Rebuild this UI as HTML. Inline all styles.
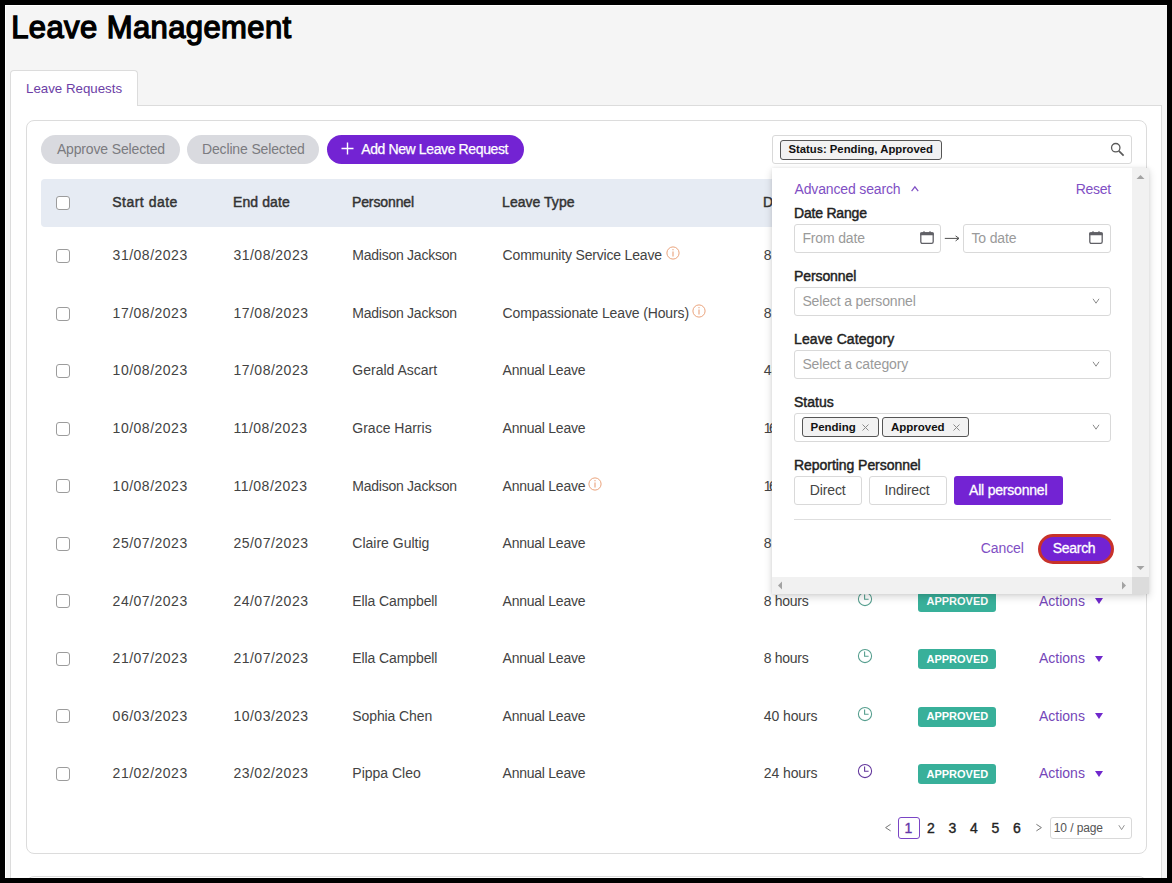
<!DOCTYPE html>
<html><head><meta charset="utf-8"><style>
html,body{margin:0;padding:0;}
body{width:1172px;height:883px;background:#000;position:relative;overflow:hidden;font-family:"Liberation Sans", sans-serif;}
.t{position:absolute;line-height:1;white-space:nowrap;}
</style></head><body>
<div style="position:absolute;left:5px;top:5px;width:1162px;height:873px;box-sizing:border-box;background:#f5f5f5;border-top:1px solid #fff;border-left:1px solid #fff;"></div>
<div class="t" style="left:11.20px;top:12.46px;font-size:31px;color:#000;font-weight:400;letter-spacing:0.4px;-webkit-text-stroke:1.35px #000;">Leave Management</div>
<div style="position:absolute;left:10px;top:105px;width:1152px;height:795px;box-sizing:border-box;background:#fff;border:1px solid #dcdcdc;"></div>
<div style="position:absolute;left:10px;top:70px;width:128px;height:36px;box-sizing:border-box;background:#fff;border:1px solid #dcdcdc;border-bottom:none;border-radius:4px 4px 0 0;"></div>
<div class="t" style="left:26.00px;top:81.54px;font-size:13.3px;color:#6c3ea6;font-weight:400;letter-spacing:0px;">Leave Requests</div>
<div style="position:absolute;left:26px;top:120px;width:1121px;height:734px;box-sizing:border-box;border:1px solid #dcdcdc;border-radius:8px;"></div>
<div style="position:absolute;left:26px;top:876px;width:1121px;height:44px;box-sizing:border-box;border:1px solid #dcdcdc;border-radius:8px;"></div>
<div style="position:absolute;left:41px;top:135px;width:139px;height:29px;box-sizing:border-box;background:#d9dadf;border-radius:15px;"></div>
<div class="t" style="left:56.90px;top:142.05px;font-size:14px;color:#7b7b80;font-weight:400;letter-spacing:-0.15px;">Approve Selected</div>
<div style="position:absolute;left:187px;top:135px;width:132px;height:29px;box-sizing:border-box;background:#d9dadf;border-radius:15px;"></div>
<div class="t" style="left:202.00px;top:142.05px;font-size:14px;color:#7b7b80;font-weight:400;letter-spacing:-0.15px;">Decline Selected</div>
<div style="position:absolute;left:327px;top:135px;width:197px;height:29px;box-sizing:border-box;background:#7323d3;border-radius:15px;"></div>
<svg style="position:absolute;left:341px;top:142px" width="13" height="13" viewBox="0 0 13 13"><path d="M6.5 0.5V12.5M0.5 6.5H12.5" stroke="#fff" stroke-width="1.4" fill="none"/></svg>
<div class="t" style="left:361.20px;top:142.05px;font-size:14px;color:#fff;font-weight:400;letter-spacing:-0.38px;-webkit-text-stroke:0.25px #fff;">Add New Leave Request</div>
<div style="position:absolute;left:41px;top:179px;width:1091px;height:48px;box-sizing:border-box;background:#e6ebf3;border-radius:4px;"></div>
<div style="position:absolute;left:56px;top:196px;width:14px;height:14px;box-sizing:border-box;border:1px solid #9c9c9c;border-radius:3px;background:#fff;"></div>
<div class="t" style="left:112.20px;top:195.15px;font-size:14px;color:#333;font-weight:400;letter-spacing:0.5px;-webkit-text-stroke:0.45px #333;">Start date</div>
<div class="t" style="left:233.00px;top:195.15px;font-size:14px;color:#333;font-weight:400;letter-spacing:0.1px;-webkit-text-stroke:0.45px #333;">End date</div>
<div class="t" style="left:351.90px;top:195.15px;font-size:14px;color:#333;font-weight:400;letter-spacing:-0.1px;-webkit-text-stroke:0.45px #333;">Personnel</div>
<div class="t" style="left:502.10px;top:195.15px;font-size:14px;color:#333;font-weight:400;letter-spacing:0.03px;-webkit-text-stroke:0.45px #333;">Leave Type</div>
<div class="t" style="left:763.00px;top:195.15px;font-size:14px;color:#333;font-weight:400;letter-spacing:0px;-webkit-text-stroke:0.45px #333;">Duration</div>
<div class="t" style="left:865.00px;top:195.15px;font-size:14px;color:#333;font-weight:700;letter-spacing:0px;"></div>
<div class="t" style="left:918.00px;top:195.15px;font-size:14px;color:#333;font-weight:400;letter-spacing:0px;-webkit-text-stroke:0.45px #333;">Status</div>
<div class="t" style="left:1039.00px;top:195.15px;font-size:14px;color:#333;font-weight:400;letter-spacing:0px;-webkit-text-stroke:0.45px #333;">Actions</div>
<div style="position:absolute;left:56px;top:249px;width:14px;height:14px;box-sizing:border-box;border:1px solid #9c9c9c;border-radius:3px;background:#fff;"></div>
<div class="t" style="left:112.60px;top:248.15px;font-size:14px;color:#434343;font-weight:400;letter-spacing:0.5px;">31/08/2023</div>
<div class="t" style="left:233.40px;top:248.15px;font-size:14px;color:#434343;font-weight:400;letter-spacing:0.5px;">31/08/2023</div>
<div class="t" style="left:352.30px;top:248.15px;font-size:14px;color:#434343;font-weight:400;letter-spacing:-0.25px;">Madison Jackson</div>
<div class="t" style="left:502.60px;top:248.15px;font-size:14px;color:#434343;font-weight:400;letter-spacing:-0.18px;">Community Service Leave</div>
<svg style="position:absolute;left:666px;top:246px" width="14" height="14" viewBox="0 0 14 14"><circle cx="7" cy="7" r="6.1" stroke="#eaa37c" stroke-width="1" fill="none"/><path d="M7 5.6V10.6" stroke="#e9a07a" stroke-width="1.1"/><circle cx="7" cy="3.7" r="0.65" fill="#e9a07a"/></svg>
<div class="t" style="left:763.80px;top:248.15px;font-size:14px;color:#434343;font-weight:400;letter-spacing:-0.3px;">8 hours</div>
<svg style="position:absolute;left:857px;top:246px" width="16" height="16" viewBox="0 0 16 16"><circle cx="8" cy="8" r="6.6" stroke="#559e8e" stroke-width="1.05" fill="none"/><path d="M7.6 3.6V8.3H11.6" stroke="#559e8e" stroke-width="1.1" fill="none"/></svg>
<div style="position:absolute;left:918px;top:246px;width:78px;height:20px;box-sizing:border-box;background:#38b09a;border-radius:3px;"></div>
<div class="t" style="left:926.50px;top:250.89px;font-size:11px;color:#fff;font-weight:700;letter-spacing:0px;">APPROVED</div>
<div class="t" style="left:1039.00px;top:248.15px;font-size:14px;color:#7446b8;font-weight:400;letter-spacing:0px;">Actions</div>
<svg style="position:absolute;left:1094px;top:252px" width="10" height="8" viewBox="0 0 10 8"><path d="M1 1H9L5 7Z" fill="#7028cc"/></svg>
<div style="position:absolute;left:56px;top:307px;width:14px;height:14px;box-sizing:border-box;border:1px solid #9c9c9c;border-radius:3px;background:#fff;"></div>
<div class="t" style="left:112.60px;top:306.15px;font-size:14px;color:#434343;font-weight:400;letter-spacing:0.5px;">17/08/2023</div>
<div class="t" style="left:233.40px;top:306.15px;font-size:14px;color:#434343;font-weight:400;letter-spacing:0.5px;">17/08/2023</div>
<div class="t" style="left:352.30px;top:306.15px;font-size:14px;color:#434343;font-weight:400;letter-spacing:-0.25px;">Madison Jackson</div>
<div class="t" style="left:502.60px;top:306.15px;font-size:14px;color:#434343;font-weight:400;letter-spacing:-0.13px;">Compassionate Leave (Hours)</div>
<svg style="position:absolute;left:692px;top:304px" width="14" height="14" viewBox="0 0 14 14"><circle cx="7" cy="7" r="6.1" stroke="#eaa37c" stroke-width="1" fill="none"/><path d="M7 5.6V10.6" stroke="#e9a07a" stroke-width="1.1"/><circle cx="7" cy="3.7" r="0.65" fill="#e9a07a"/></svg>
<div class="t" style="left:763.80px;top:306.15px;font-size:14px;color:#434343;font-weight:400;letter-spacing:-0.3px;">8 hours</div>
<svg style="position:absolute;left:857px;top:303px" width="16" height="16" viewBox="0 0 16 16"><circle cx="8" cy="8" r="6.6" stroke="#559e8e" stroke-width="1.05" fill="none"/><path d="M7.6 3.6V8.3H11.6" stroke="#559e8e" stroke-width="1.1" fill="none"/></svg>
<div style="position:absolute;left:918px;top:304px;width:78px;height:20px;box-sizing:border-box;background:#38b09a;border-radius:3px;"></div>
<div class="t" style="left:926.50px;top:308.42px;font-size:11px;color:#fff;font-weight:700;letter-spacing:0px;">APPROVED</div>
<div class="t" style="left:1039.00px;top:306.15px;font-size:14px;color:#7446b8;font-weight:400;letter-spacing:0px;">Actions</div>
<svg style="position:absolute;left:1094px;top:310px" width="10" height="8" viewBox="0 0 10 8"><path d="M1 1H9L5 7Z" fill="#7028cc"/></svg>
<div style="position:absolute;left:56px;top:364px;width:14px;height:14px;box-sizing:border-box;border:1px solid #9c9c9c;border-radius:3px;background:#fff;"></div>
<div class="t" style="left:112.60px;top:363.15px;font-size:14px;color:#434343;font-weight:400;letter-spacing:0.5px;">10/08/2023</div>
<div class="t" style="left:233.40px;top:363.15px;font-size:14px;color:#434343;font-weight:400;letter-spacing:0.5px;">17/08/2023</div>
<div class="t" style="left:352.30px;top:363.15px;font-size:14px;color:#434343;font-weight:400;letter-spacing:0px;">Gerald Ascart</div>
<div class="t" style="left:502.60px;top:363.15px;font-size:14px;color:#434343;font-weight:400;letter-spacing:-0.25px;">Annual Leave</div>
<div class="t" style="left:763.80px;top:363.15px;font-size:14px;color:#434343;font-weight:400;letter-spacing:-0.1px;">48 hours</div>
<svg style="position:absolute;left:857px;top:361px" width="16" height="16" viewBox="0 0 16 16"><circle cx="8" cy="8" r="6.6" stroke="#559e8e" stroke-width="1.05" fill="none"/><path d="M7.6 3.6V8.3H11.6" stroke="#559e8e" stroke-width="1.1" fill="none"/></svg>
<div style="position:absolute;left:918px;top:362px;width:78px;height:20px;box-sizing:border-box;background:#38b09a;border-radius:3px;"></div>
<div class="t" style="left:926.50px;top:365.95px;font-size:11px;color:#fff;font-weight:700;letter-spacing:0px;">APPROVED</div>
<div class="t" style="left:1039.00px;top:363.15px;font-size:14px;color:#7446b8;font-weight:400;letter-spacing:0px;">Actions</div>
<svg style="position:absolute;left:1094px;top:367px" width="10" height="8" viewBox="0 0 10 8"><path d="M1 1H9L5 7Z" fill="#7028cc"/></svg>
<div style="position:absolute;left:56px;top:422px;width:14px;height:14px;box-sizing:border-box;border:1px solid #9c9c9c;border-radius:3px;background:#fff;"></div>
<div class="t" style="left:112.60px;top:421.15px;font-size:14px;color:#434343;font-weight:400;letter-spacing:0.5px;">10/08/2023</div>
<div class="t" style="left:233.40px;top:421.15px;font-size:14px;color:#434343;font-weight:400;letter-spacing:0.5px;">11/08/2023</div>
<div class="t" style="left:352.30px;top:421.15px;font-size:14px;color:#434343;font-weight:400;letter-spacing:0px;">Grace Harris</div>
<div class="t" style="left:502.60px;top:421.15px;font-size:14px;color:#434343;font-weight:400;letter-spacing:-0.25px;">Annual Leave</div>
<div class="t" style="left:763.80px;top:421.15px;font-size:14px;color:#434343;font-weight:400;letter-spacing:-0.1px;">1<span style="margin-left:-2.5px">6</span> hours</div>
<svg style="position:absolute;left:857px;top:418px" width="16" height="16" viewBox="0 0 16 16"><circle cx="8" cy="8" r="6.6" stroke="#559e8e" stroke-width="1.05" fill="none"/><path d="M7.6 3.6V8.3H11.6" stroke="#559e8e" stroke-width="1.1" fill="none"/></svg>
<div style="position:absolute;left:918px;top:419px;width:78px;height:20px;box-sizing:border-box;background:#38b09a;border-radius:3px;"></div>
<div class="t" style="left:926.50px;top:423.48px;font-size:11px;color:#fff;font-weight:700;letter-spacing:0px;">APPROVED</div>
<div class="t" style="left:1039.00px;top:421.15px;font-size:14px;color:#7446b8;font-weight:400;letter-spacing:0px;">Actions</div>
<svg style="position:absolute;left:1094px;top:425px" width="10" height="8" viewBox="0 0 10 8"><path d="M1 1H9L5 7Z" fill="#7028cc"/></svg>
<div style="position:absolute;left:56px;top:479px;width:14px;height:14px;box-sizing:border-box;border:1px solid #9c9c9c;border-radius:3px;background:#fff;"></div>
<div class="t" style="left:112.60px;top:479.15px;font-size:14px;color:#434343;font-weight:400;letter-spacing:0.5px;">10/08/2023</div>
<div class="t" style="left:233.40px;top:479.15px;font-size:14px;color:#434343;font-weight:400;letter-spacing:0.5px;">11/08/2023</div>
<div class="t" style="left:352.30px;top:479.15px;font-size:14px;color:#434343;font-weight:400;letter-spacing:-0.25px;">Madison Jackson</div>
<div class="t" style="left:502.60px;top:479.15px;font-size:14px;color:#434343;font-weight:400;letter-spacing:-0.25px;">Annual Leave</div>
<svg style="position:absolute;left:588px;top:477px" width="14" height="14" viewBox="0 0 14 14"><circle cx="7" cy="7" r="6.1" stroke="#eaa37c" stroke-width="1" fill="none"/><path d="M7 5.6V10.6" stroke="#e9a07a" stroke-width="1.1"/><circle cx="7" cy="3.7" r="0.65" fill="#e9a07a"/></svg>
<div class="t" style="left:763.80px;top:479.15px;font-size:14px;color:#434343;font-weight:400;letter-spacing:-0.1px;">1<span style="margin-left:-2.5px">6</span> hours</div>
<svg style="position:absolute;left:857px;top:476px" width="16" height="16" viewBox="0 0 16 16"><circle cx="8" cy="8" r="6.6" stroke="#559e8e" stroke-width="1.05" fill="none"/><path d="M7.6 3.6V8.3H11.6" stroke="#559e8e" stroke-width="1.1" fill="none"/></svg>
<div style="position:absolute;left:918px;top:477px;width:78px;height:20px;box-sizing:border-box;background:#38b09a;border-radius:3px;"></div>
<div class="t" style="left:926.50px;top:481.01px;font-size:11px;color:#fff;font-weight:700;letter-spacing:0px;">APPROVED</div>
<div class="t" style="left:1039.00px;top:479.15px;font-size:14px;color:#7446b8;font-weight:400;letter-spacing:0px;">Actions</div>
<svg style="position:absolute;left:1094px;top:482px" width="10" height="8" viewBox="0 0 10 8"><path d="M1 1H9L5 7Z" fill="#7028cc"/></svg>
<div style="position:absolute;left:56px;top:537px;width:14px;height:14px;box-sizing:border-box;border:1px solid #9c9c9c;border-radius:3px;background:#fff;"></div>
<div class="t" style="left:112.60px;top:536.15px;font-size:14px;color:#434343;font-weight:400;letter-spacing:0.5px;">25/07/2023</div>
<div class="t" style="left:233.40px;top:536.15px;font-size:14px;color:#434343;font-weight:400;letter-spacing:0.5px;">25/07/2023</div>
<div class="t" style="left:352.30px;top:536.15px;font-size:14px;color:#434343;font-weight:400;letter-spacing:0px;">Claire Gultig</div>
<div class="t" style="left:502.60px;top:536.15px;font-size:14px;color:#434343;font-weight:400;letter-spacing:-0.25px;">Annual Leave</div>
<div class="t" style="left:763.80px;top:536.15px;font-size:14px;color:#434343;font-weight:400;letter-spacing:-0.3px;">8 hours</div>
<svg style="position:absolute;left:857px;top:533px" width="16" height="16" viewBox="0 0 16 16"><circle cx="8" cy="8" r="6.6" stroke="#559e8e" stroke-width="1.05" fill="none"/><path d="M7.6 3.6V8.3H11.6" stroke="#559e8e" stroke-width="1.1" fill="none"/></svg>
<div style="position:absolute;left:918px;top:534px;width:78px;height:20px;box-sizing:border-box;background:#38b09a;border-radius:3px;"></div>
<div class="t" style="left:926.50px;top:538.54px;font-size:11px;color:#fff;font-weight:700;letter-spacing:0px;">APPROVED</div>
<div class="t" style="left:1039.00px;top:536.15px;font-size:14px;color:#7446b8;font-weight:400;letter-spacing:0px;">Actions</div>
<svg style="position:absolute;left:1094px;top:540px" width="10" height="8" viewBox="0 0 10 8"><path d="M1 1H9L5 7Z" fill="#7028cc"/></svg>
<div style="position:absolute;left:56px;top:594px;width:14px;height:14px;box-sizing:border-box;border:1px solid #9c9c9c;border-radius:3px;background:#fff;"></div>
<div class="t" style="left:112.60px;top:594.15px;font-size:14px;color:#434343;font-weight:400;letter-spacing:0.5px;">24/07/2023</div>
<div class="t" style="left:233.40px;top:594.15px;font-size:14px;color:#434343;font-weight:400;letter-spacing:0.5px;">24/07/2023</div>
<div class="t" style="left:352.30px;top:594.15px;font-size:14px;color:#434343;font-weight:400;letter-spacing:-0.1px;">Ella Campbell</div>
<div class="t" style="left:502.60px;top:594.15px;font-size:14px;color:#434343;font-weight:400;letter-spacing:-0.25px;">Annual Leave</div>
<div class="t" style="left:763.80px;top:594.15px;font-size:14px;color:#434343;font-weight:400;letter-spacing:-0.3px;">8 hours</div>
<svg style="position:absolute;left:857px;top:591px" width="16" height="16" viewBox="0 0 16 16"><circle cx="8" cy="8" r="6.6" stroke="#559e8e" stroke-width="1.05" fill="none"/><path d="M7.6 3.6V8.3H11.6" stroke="#559e8e" stroke-width="1.1" fill="none"/></svg>
<div style="position:absolute;left:918px;top:592px;width:78px;height:20px;box-sizing:border-box;background:#38b09a;border-radius:3px;"></div>
<div class="t" style="left:926.50px;top:596.07px;font-size:11px;color:#fff;font-weight:700;letter-spacing:0px;">APPROVED</div>
<div class="t" style="left:1039.00px;top:594.15px;font-size:14px;color:#7446b8;font-weight:400;letter-spacing:0px;">Actions</div>
<svg style="position:absolute;left:1094px;top:597px" width="10" height="8" viewBox="0 0 10 8"><path d="M1 1H9L5 7Z" fill="#7028cc"/></svg>
<div style="position:absolute;left:56px;top:652px;width:14px;height:14px;box-sizing:border-box;border:1px solid #9c9c9c;border-radius:3px;background:#fff;"></div>
<div class="t" style="left:112.60px;top:651.15px;font-size:14px;color:#434343;font-weight:400;letter-spacing:0.5px;">21/07/2023</div>
<div class="t" style="left:233.40px;top:651.15px;font-size:14px;color:#434343;font-weight:400;letter-spacing:0.5px;">21/07/2023</div>
<div class="t" style="left:352.30px;top:651.15px;font-size:14px;color:#434343;font-weight:400;letter-spacing:-0.1px;">Ella Campbell</div>
<div class="t" style="left:502.60px;top:651.15px;font-size:14px;color:#434343;font-weight:400;letter-spacing:-0.25px;">Annual Leave</div>
<div class="t" style="left:763.80px;top:651.15px;font-size:14px;color:#434343;font-weight:400;letter-spacing:-0.3px;">8 hours</div>
<svg style="position:absolute;left:857px;top:648px" width="16" height="16" viewBox="0 0 16 16"><circle cx="8" cy="8" r="6.6" stroke="#559e8e" stroke-width="1.05" fill="none"/><path d="M7.6 3.6V8.3H11.6" stroke="#559e8e" stroke-width="1.1" fill="none"/></svg>
<div style="position:absolute;left:918px;top:649px;width:78px;height:20px;box-sizing:border-box;background:#38b09a;border-radius:3px;"></div>
<div class="t" style="left:926.50px;top:653.60px;font-size:11px;color:#fff;font-weight:700;letter-spacing:0px;">APPROVED</div>
<div class="t" style="left:1039.00px;top:651.15px;font-size:14px;color:#7446b8;font-weight:400;letter-spacing:0px;">Actions</div>
<svg style="position:absolute;left:1094px;top:655px" width="10" height="8" viewBox="0 0 10 8"><path d="M1 1H9L5 7Z" fill="#7028cc"/></svg>
<div style="position:absolute;left:56px;top:709px;width:14px;height:14px;box-sizing:border-box;border:1px solid #9c9c9c;border-radius:3px;background:#fff;"></div>
<div class="t" style="left:112.60px;top:709.15px;font-size:14px;color:#434343;font-weight:400;letter-spacing:0.5px;">06/03/2023</div>
<div class="t" style="left:233.40px;top:709.15px;font-size:14px;color:#434343;font-weight:400;letter-spacing:0.5px;">10/03/2023</div>
<div class="t" style="left:352.30px;top:709.15px;font-size:14px;color:#434343;font-weight:400;letter-spacing:-0.1px;">Sophia Chen</div>
<div class="t" style="left:502.60px;top:709.15px;font-size:14px;color:#434343;font-weight:400;letter-spacing:-0.25px;">Annual Leave</div>
<div class="t" style="left:763.80px;top:709.15px;font-size:14px;color:#434343;font-weight:400;letter-spacing:-0.1px;">40 hours</div>
<svg style="position:absolute;left:857px;top:706px" width="16" height="16" viewBox="0 0 16 16"><circle cx="8" cy="8" r="6.6" stroke="#559e8e" stroke-width="1.05" fill="none"/><path d="M7.6 3.6V8.3H11.6" stroke="#559e8e" stroke-width="1.1" fill="none"/></svg>
<div style="position:absolute;left:918px;top:707px;width:78px;height:20px;box-sizing:border-box;background:#38b09a;border-radius:3px;"></div>
<div class="t" style="left:926.50px;top:711.13px;font-size:11px;color:#fff;font-weight:700;letter-spacing:0px;">APPROVED</div>
<div class="t" style="left:1039.00px;top:709.15px;font-size:14px;color:#7446b8;font-weight:400;letter-spacing:0px;">Actions</div>
<svg style="position:absolute;left:1094px;top:712px" width="10" height="8" viewBox="0 0 10 8"><path d="M1 1H9L5 7Z" fill="#7028cc"/></svg>
<div style="position:absolute;left:56px;top:767px;width:14px;height:14px;box-sizing:border-box;border:1px solid #9c9c9c;border-radius:3px;background:#fff;"></div>
<div class="t" style="left:112.60px;top:766.15px;font-size:14px;color:#434343;font-weight:400;letter-spacing:0.5px;">21/02/2023</div>
<div class="t" style="left:233.40px;top:766.15px;font-size:14px;color:#434343;font-weight:400;letter-spacing:0.5px;">23/02/2023</div>
<div class="t" style="left:352.30px;top:766.15px;font-size:14px;color:#434343;font-weight:400;letter-spacing:0px;">Pippa Cleo</div>
<div class="t" style="left:502.60px;top:766.15px;font-size:14px;color:#434343;font-weight:400;letter-spacing:-0.25px;">Annual Leave</div>
<div class="t" style="left:763.80px;top:766.15px;font-size:14px;color:#434343;font-weight:400;letter-spacing:-0.1px;">24 hours</div>
<svg style="position:absolute;left:857px;top:763px" width="16" height="16" viewBox="0 0 16 16"><circle cx="8" cy="8" r="6.6" stroke="#62369c" stroke-width="1.05" fill="none"/><path d="M7.6 3.6V8.3H11.6" stroke="#62369c" stroke-width="1.1" fill="none"/></svg>
<div style="position:absolute;left:918px;top:764px;width:78px;height:20px;box-sizing:border-box;background:#38b09a;border-radius:3px;"></div>
<div class="t" style="left:926.50px;top:768.66px;font-size:11px;color:#fff;font-weight:700;letter-spacing:0px;">APPROVED</div>
<div class="t" style="left:1039.00px;top:766.15px;font-size:14px;color:#7446b8;font-weight:400;letter-spacing:0px;">Actions</div>
<svg style="position:absolute;left:1094px;top:770px" width="10" height="8" viewBox="0 0 10 8"><path d="M1 1H9L5 7Z" fill="#7028cc"/></svg>
<svg style="position:absolute;left:883px;top:822px" width="10" height="12" viewBox="0 0 10 12"><path d="M7.6 2.3L2.6 5.6L7.6 8.9" stroke="#777" stroke-width="1" fill="none"/></svg>
<div style="position:absolute;left:898px;top:817px;width:22px;height:22px;box-sizing:border-box;border:1px solid #7a45c5;border-radius:3px;"></div>
<div class="t" style="left:904.50px;top:821.15px;font-size:14px;color:#6437a8;font-weight:400;letter-spacing:0px;-webkit-text-stroke:0.35px #6437a8;">1</div>
<div class="t" style="left:926.90px;top:821.15px;font-size:14px;color:#222;font-weight:400;letter-spacing:0px;-webkit-text-stroke:0.35px #222;">2</div>
<div class="t" style="left:948.40px;top:821.15px;font-size:14px;color:#222;font-weight:400;letter-spacing:0px;-webkit-text-stroke:0.35px #222;">3</div>
<div class="t" style="left:969.90px;top:821.15px;font-size:14px;color:#222;font-weight:400;letter-spacing:0px;-webkit-text-stroke:0.35px #222;">4</div>
<div class="t" style="left:991.40px;top:821.15px;font-size:14px;color:#222;font-weight:400;letter-spacing:0px;-webkit-text-stroke:0.35px #222;">5</div>
<div class="t" style="left:1012.90px;top:821.15px;font-size:14px;color:#222;font-weight:400;letter-spacing:0px;-webkit-text-stroke:0.35px #222;">6</div>
<svg style="position:absolute;left:1034px;top:822px" width="10" height="12" viewBox="0 0 10 12"><path d="M2.4 2.3L7.4 5.6L2.4 8.9" stroke="#777" stroke-width="1" fill="none"/></svg>
<div style="position:absolute;left:1050px;top:817px;width:82px;height:22px;box-sizing:border-box;border:1px solid #d9d9d9;border-radius:3px;background:#fff;"></div>
<div class="t" style="left:1053.80px;top:821.64px;font-size:12px;color:#555;font-weight:400;letter-spacing:-0.1px;">10 / page</div>
<svg style="position:absolute;left:1117px;top:824px" width="9" height="7" viewBox="0 0 9 7"><path d="M1.8 1.2L4.6 5.6L7.4 1.2" stroke="#888" stroke-width="0.9" fill="none"/></svg>
<div style="position:absolute;left:772px;top:135px;width:360px;height:29px;box-sizing:border-box;border:1px solid #d9d9d9;border-radius:3px;background:#fff;"></div>
<div style="position:absolute;left:780px;top:140px;width:162px;height:20px;box-sizing:border-box;border:1px solid #555;border-radius:3px;background:#f2f2f2;"></div>
<div class="t" style="left:788.40px;top:143.93px;font-size:11.3px;color:#111;font-weight:700;letter-spacing:0px;">Status: Pending, Approved</div>
<svg style="position:absolute;left:1109px;top:141px" width="17" height="17" viewBox="0 0 17 17"><circle cx="6.75" cy="6.7" r="4.2" stroke="#5a5a5a" stroke-width="1.3" fill="none"/><path d="M9.8 9.8L14.6 14.6" stroke="#5a5a5a" stroke-width="1.7"/></svg>
<div style="position:absolute;left:772px;top:168px;width:377px;height:426px;background:#fff;box-shadow:0 3px 8px rgba(0,0,0,0.16),0 0 3px rgba(0,0,0,0.08);"></div>
<div style="position:absolute;left:1132px;top:168px;width:17px;height:409px;box-sizing:border-box;background:#f1f1f1;"></div>
<div style="position:absolute;left:772px;top:577px;width:360px;height:17px;box-sizing:border-box;background:#f1f1f1;"></div>
<div style="position:absolute;left:1132px;top:577px;width:17px;height:17px;box-sizing:border-box;background:#dcdcdc;"></div>
<svg style="position:absolute;left:1136px;top:174px" width="9" height="6" viewBox="0 0 9 6"><path d="M0.5 5L4.5 1L8.5 5Z" fill="#a3a3a3"/></svg>
<svg style="position:absolute;left:1136px;top:565px" width="9" height="6" viewBox="0 0 9 6"><path d="M0.5 1L4.5 5L8.5 1Z" fill="#a3a3a3"/></svg>
<svg style="position:absolute;left:777px;top:581px" width="6" height="9" viewBox="0 0 6 9"><path d="M5 0.5L1 4.5L5 8.5Z" fill="#a3a3a3"/></svg>
<svg style="position:absolute;left:1121px;top:581px" width="6" height="9" viewBox="0 0 6 9"><path d="M1 0.5L5 4.5L1 8.5Z" fill="#a3a3a3"/></svg>
<div class="t" style="left:794.50px;top:181.95px;font-size:14px;color:#7f4fc4;font-weight:400;letter-spacing:-0.15px;">Advanced search</div>
<svg style="position:absolute;left:910px;top:185px" width="10" height="8" viewBox="0 0 10 8"><path d="M1.6 6.2L4.9 1.8L8.2 6.2" stroke="#7f4fc4" stroke-width="1.2" fill="none"/></svg>
<div class="t" style="left:1075.80px;top:181.95px;font-size:14px;color:#7f4fc4;font-weight:400;letter-spacing:-0.3px;">Reset</div>
<div class="t" style="left:794.00px;top:206.15px;font-size:14px;color:#222;font-weight:400;letter-spacing:-0.2px;-webkit-text-stroke:0.45px #222;">Date Range</div>
<div style="position:absolute;left:794px;top:224px;width:147px;height:29px;box-sizing:border-box;border:1px solid #d9d9d9;border-radius:3px;background:#fff;"></div>
<div class="t" style="left:802.40px;top:231.15px;font-size:14px;color:#9a9a9a;font-weight:400;letter-spacing:-0.15px;">From date</div>
<div style="position:absolute;left:963px;top:224px;width:148px;height:29px;box-sizing:border-box;border:1px solid #d9d9d9;border-radius:3px;background:#fff;"></div>
<div class="t" style="left:971.50px;top:231.15px;font-size:14px;color:#9a9a9a;font-weight:400;letter-spacing:-0.15px;">To date</div>
<svg style="position:absolute;left:920px;top:231px" width="14" height="14" viewBox="0 0 14 14"><rect x="0.8" y="1.8" width="12.4" height="10.6" rx="1.6" stroke="#606066" stroke-width="1.3" fill="none"/><path d="M0.2 1.8Q0.2 1.2 1.5 1.2H12.5Q13.8 1.2 13.8 2.5V4.2H0.2Z" fill="#606066"/><rect x="3.2" y="0.2" width="1.6" height="2" rx="0.6" fill="#606066"/><rect x="9.2" y="0.2" width="1.6" height="2" rx="0.6" fill="#606066"/></svg>
<svg style="position:absolute;left:1089px;top:231px" width="14" height="14" viewBox="0 0 14 14"><rect x="0.8" y="1.8" width="12.4" height="10.6" rx="1.6" stroke="#606066" stroke-width="1.3" fill="none"/><path d="M0.2 1.8Q0.2 1.2 1.5 1.2H12.5Q13.8 1.2 13.8 2.5V4.2H0.2Z" fill="#606066"/><rect x="3.2" y="0.2" width="1.6" height="2" rx="0.6" fill="#606066"/><rect x="9.2" y="0.2" width="1.6" height="2" rx="0.6" fill="#606066"/></svg>
<svg style="position:absolute;left:944px;top:233px" width="16" height="10" viewBox="0 0 16 10"><path d="M0.8 5.4H15M11.6 2.9L15 5.4L11.6 7.9" stroke="#505050" stroke-width="1" fill="none"/></svg>
<div class="t" style="left:794.00px;top:269.15px;font-size:14px;color:#222;font-weight:400;letter-spacing:-0.1px;-webkit-text-stroke:0.45px #222;">Personnel</div>
<div style="position:absolute;left:794px;top:287px;width:317px;height:29px;box-sizing:border-box;border:1px solid #d9d9d9;border-radius:3px;background:#fff;"></div>
<div class="t" style="left:802.40px;top:294.15px;font-size:14px;color:#9a9a9a;font-weight:400;letter-spacing:-0.15px;">Select a personnel</div>
<svg style="position:absolute;left:1091px;top:297px" width="10" height="8" viewBox="0 0 10 8"><path d="M2 1.8L5 6.2L8 1.8" stroke="#8c8c8c" stroke-width="1" fill="none"/></svg>
<div class="t" style="left:794.00px;top:331.75px;font-size:14px;color:#222;font-weight:400;letter-spacing:0.1px;-webkit-text-stroke:0.45px #222;">Leave Category</div>
<div style="position:absolute;left:794px;top:350px;width:317px;height:29px;box-sizing:border-box;border:1px solid #d9d9d9;border-radius:3px;background:#fff;"></div>
<div class="t" style="left:802.40px;top:357.15px;font-size:14px;color:#9a9a9a;font-weight:400;letter-spacing:-0.15px;">Select a category</div>
<svg style="position:absolute;left:1091px;top:360px" width="10" height="8" viewBox="0 0 10 8"><path d="M2 1.8L5 6.2L8 1.8" stroke="#8c8c8c" stroke-width="1" fill="none"/></svg>
<div class="t" style="left:794.00px;top:395.15px;font-size:14px;color:#222;font-weight:400;letter-spacing:0px;-webkit-text-stroke:0.45px #222;">Status</div>
<div style="position:absolute;left:794px;top:413px;width:317px;height:29px;box-sizing:border-box;border:1px solid #d9d9d9;border-radius:3px;background:#fff;"></div>
<svg style="position:absolute;left:1091px;top:423px" width="10" height="8" viewBox="0 0 10 8"><path d="M2 1.8L5 6.2L8 1.8" stroke="#8c8c8c" stroke-width="1" fill="none"/></svg>
<div style="position:absolute;left:802px;top:417px;width:77px;height:20px;box-sizing:border-box;border:1px solid #555;border-radius:3px;background:#f2f2f2;"></div>
<div class="t" style="left:810.50px;top:422.07px;font-size:11.5px;color:#111;font-weight:700;letter-spacing:0px;">Pending</div>
<svg style="position:absolute;left:861px;top:423px" width="9" height="9" viewBox="0 0 9 9"><path d="M1.5 1.5L7.5 7.5M7.5 1.5L1.5 7.5" stroke="#8a8a8a" stroke-width="1"/></svg>
<div style="position:absolute;left:882px;top:417px;width:87px;height:20px;box-sizing:border-box;border:1px solid #555;border-radius:3px;background:#f2f2f2;"></div>
<div class="t" style="left:890.90px;top:422.07px;font-size:11.5px;color:#111;font-weight:700;letter-spacing:0px;">Approved</div>
<svg style="position:absolute;left:952px;top:423px" width="9" height="9" viewBox="0 0 9 9"><path d="M1.5 1.5L7.5 7.5M7.5 1.5L1.5 7.5" stroke="#8a8a8a" stroke-width="1"/></svg>
<div class="t" style="left:794.00px;top:458.45px;font-size:14px;color:#222;font-weight:400;letter-spacing:-0.05px;-webkit-text-stroke:0.45px #222;">Reporting Personnel</div>
<div style="position:absolute;left:794px;top:476px;width:68px;height:29px;box-sizing:border-box;border:1px solid #d9d9d9;border-radius:3px;background:#fff;"></div>
<div class="t" style="left:809.70px;top:483.15px;font-size:14px;color:#444;font-weight:400;letter-spacing:-0.1px;">Direct</div>
<div style="position:absolute;left:869px;top:476px;width:78px;height:29px;box-sizing:border-box;border:1px solid #d9d9d9;border-radius:3px;background:#fff;"></div>
<div class="t" style="left:884.50px;top:483.15px;font-size:14px;color:#444;font-weight:400;letter-spacing:-0.1px;">Indirect</div>
<div style="position:absolute;left:954px;top:476px;width:109px;height:29px;box-sizing:border-box;background:#7323d3;border-radius:3px;"></div>
<div class="t" style="left:969.00px;top:483.15px;font-size:14px;color:#fff;font-weight:400;letter-spacing:-0.2px;-webkit-text-stroke:0.3px #fff;">All personnel</div>
<div style="position:absolute;left:794px;top:519px;width:317px;height:1px;box-sizing:border-box;background:#dedede;"></div>
<div class="t" style="left:980.80px;top:540.55px;font-size:14px;color:#7f4fc4;font-weight:400;letter-spacing:-0.1px;">Cancel</div>
<div style="position:absolute;left:1038px;top:534px;width:76px;height:30px;box-sizing:border-box;background:#7323d3;border:3px solid #c8322a;border-radius:16px;"></div>
<div class="t" style="left:1052.80px;top:540.75px;font-size:14px;color:#fff;font-weight:400;letter-spacing:-0.3px;-webkit-text-stroke:0.3px #fff;">Search</div>
<div style="position:absolute;left:0px;top:0px;width:1172px;height:5px;box-sizing:border-box;background:#000;"></div>
<div style="position:absolute;left:0px;top:0px;width:5px;height:883px;box-sizing:border-box;background:#000;"></div>
<div style="position:absolute;left:1167px;top:0px;width:5px;height:883px;box-sizing:border-box;background:#000;"></div>
<div style="position:absolute;left:0px;top:878px;width:1172px;height:5px;box-sizing:border-box;background:#000;"></div>
</body></html>
